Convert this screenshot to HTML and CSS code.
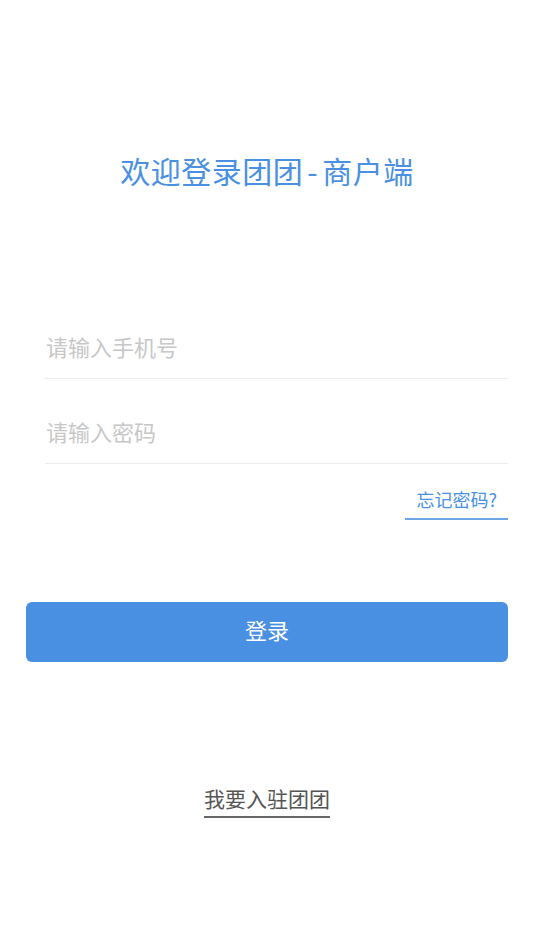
FILE: index.html
```html
<!DOCTYPE html>
<html lang="zh-CN">
<head>
<meta charset="utf-8">
<meta name="viewport" content="width=device-width, initial-scale=1">
<title>欢迎登录团团-商户端</title>
<link rel="stylesheet" href="styles.css">
</head>
<body>
<main class="page">
  <h1 class="title">欢迎登录团团<span class="dash">-</span>商户端</h1>
  <form class="form">
    <div class="field">
      <input class="input" type="tel" placeholder="请输入手机号">
    </div>
    <div class="field">
      <input class="input" type="password" placeholder="请输入密码">
    </div>
    <div class="forgot-row">
      <a class="forgot" href="#">忘记密码?</a>
    </div>
    <button class="submit" type="button">登录</button>
  </form>
  <div class="join-row">
    <a class="join" href="#">我要入驻团团</a>
  </div>
</main>
</body>
</html>
```

FILE: styles.css
```css
html, body {
  margin: 0;
  padding: 0;
  background: #ffffff;
}

body {
  font-family: "Noto Sans CJK SC", "Noto Sans", sans-serif;
  color: #333333;
}

.page {
  padding: 0 26px;
}

.title {
  margin: 0;
  padding-top: 150px;
  font-size: 30px;
  line-height: 40px;
  font-weight: 400;
  letter-spacing: 0.5px;
  color: #4a90e2;
  text-align: center;
}

.dash {
  padding: 0 4px;
}

.form {
  margin: 132px 0 0;
  display: flex;
  flex-direction: column;
}

.field {
  margin-left: 19px;
  padding-bottom: 8px;
  border-bottom: 1px solid #ececec;
}

.field + .field {
  margin-top: 28px;
}

.input {
  display: block;
  width: 100%;
  height: 48px;
  padding: 0 0 0 1px;
  margin: 0;
  border: none;
  outline: none;
  background: transparent;
  font-family: "Noto Sans CJK SC", "Noto Sans", sans-serif;
  font-size: 22px;
  color: #333333;
}

.input::placeholder {
  color: #c7c7c7;
}

.forgot-row {
  display: flex;
  justify-content: flex-end;
  margin-top: 26px;
}

.forgot {
  display: block;
  padding: 0 11px 10px;
  font-size: 18px;
  line-height: 18px;
  color: #4a90e2;
  text-decoration: none;
  border-bottom: 2px solid #6ea5e6;
}

.submit {
  display: block;
  box-sizing: border-box;
  width: 100%;
  height: 60px;
  margin-top: 82px;
  padding: 0 0 6px;
  border: none;
  border-radius: 6px;
  background: #4a90e2;
  color: #ffffff;
  font-family: "Noto Sans CJK SC", "Noto Sans", sans-serif;
  font-size: 22px;
  line-height: 54px;
}

.join-row {
  display: flex;
  justify-content: center;
  margin-top: 123px;
}

.join {
  display: block;
  padding-bottom: 5px;
  font-size: 21px;
  line-height: 26px;
  color: #555555;
  text-decoration: none;
  border-bottom: 2px solid #666666;
}
```
